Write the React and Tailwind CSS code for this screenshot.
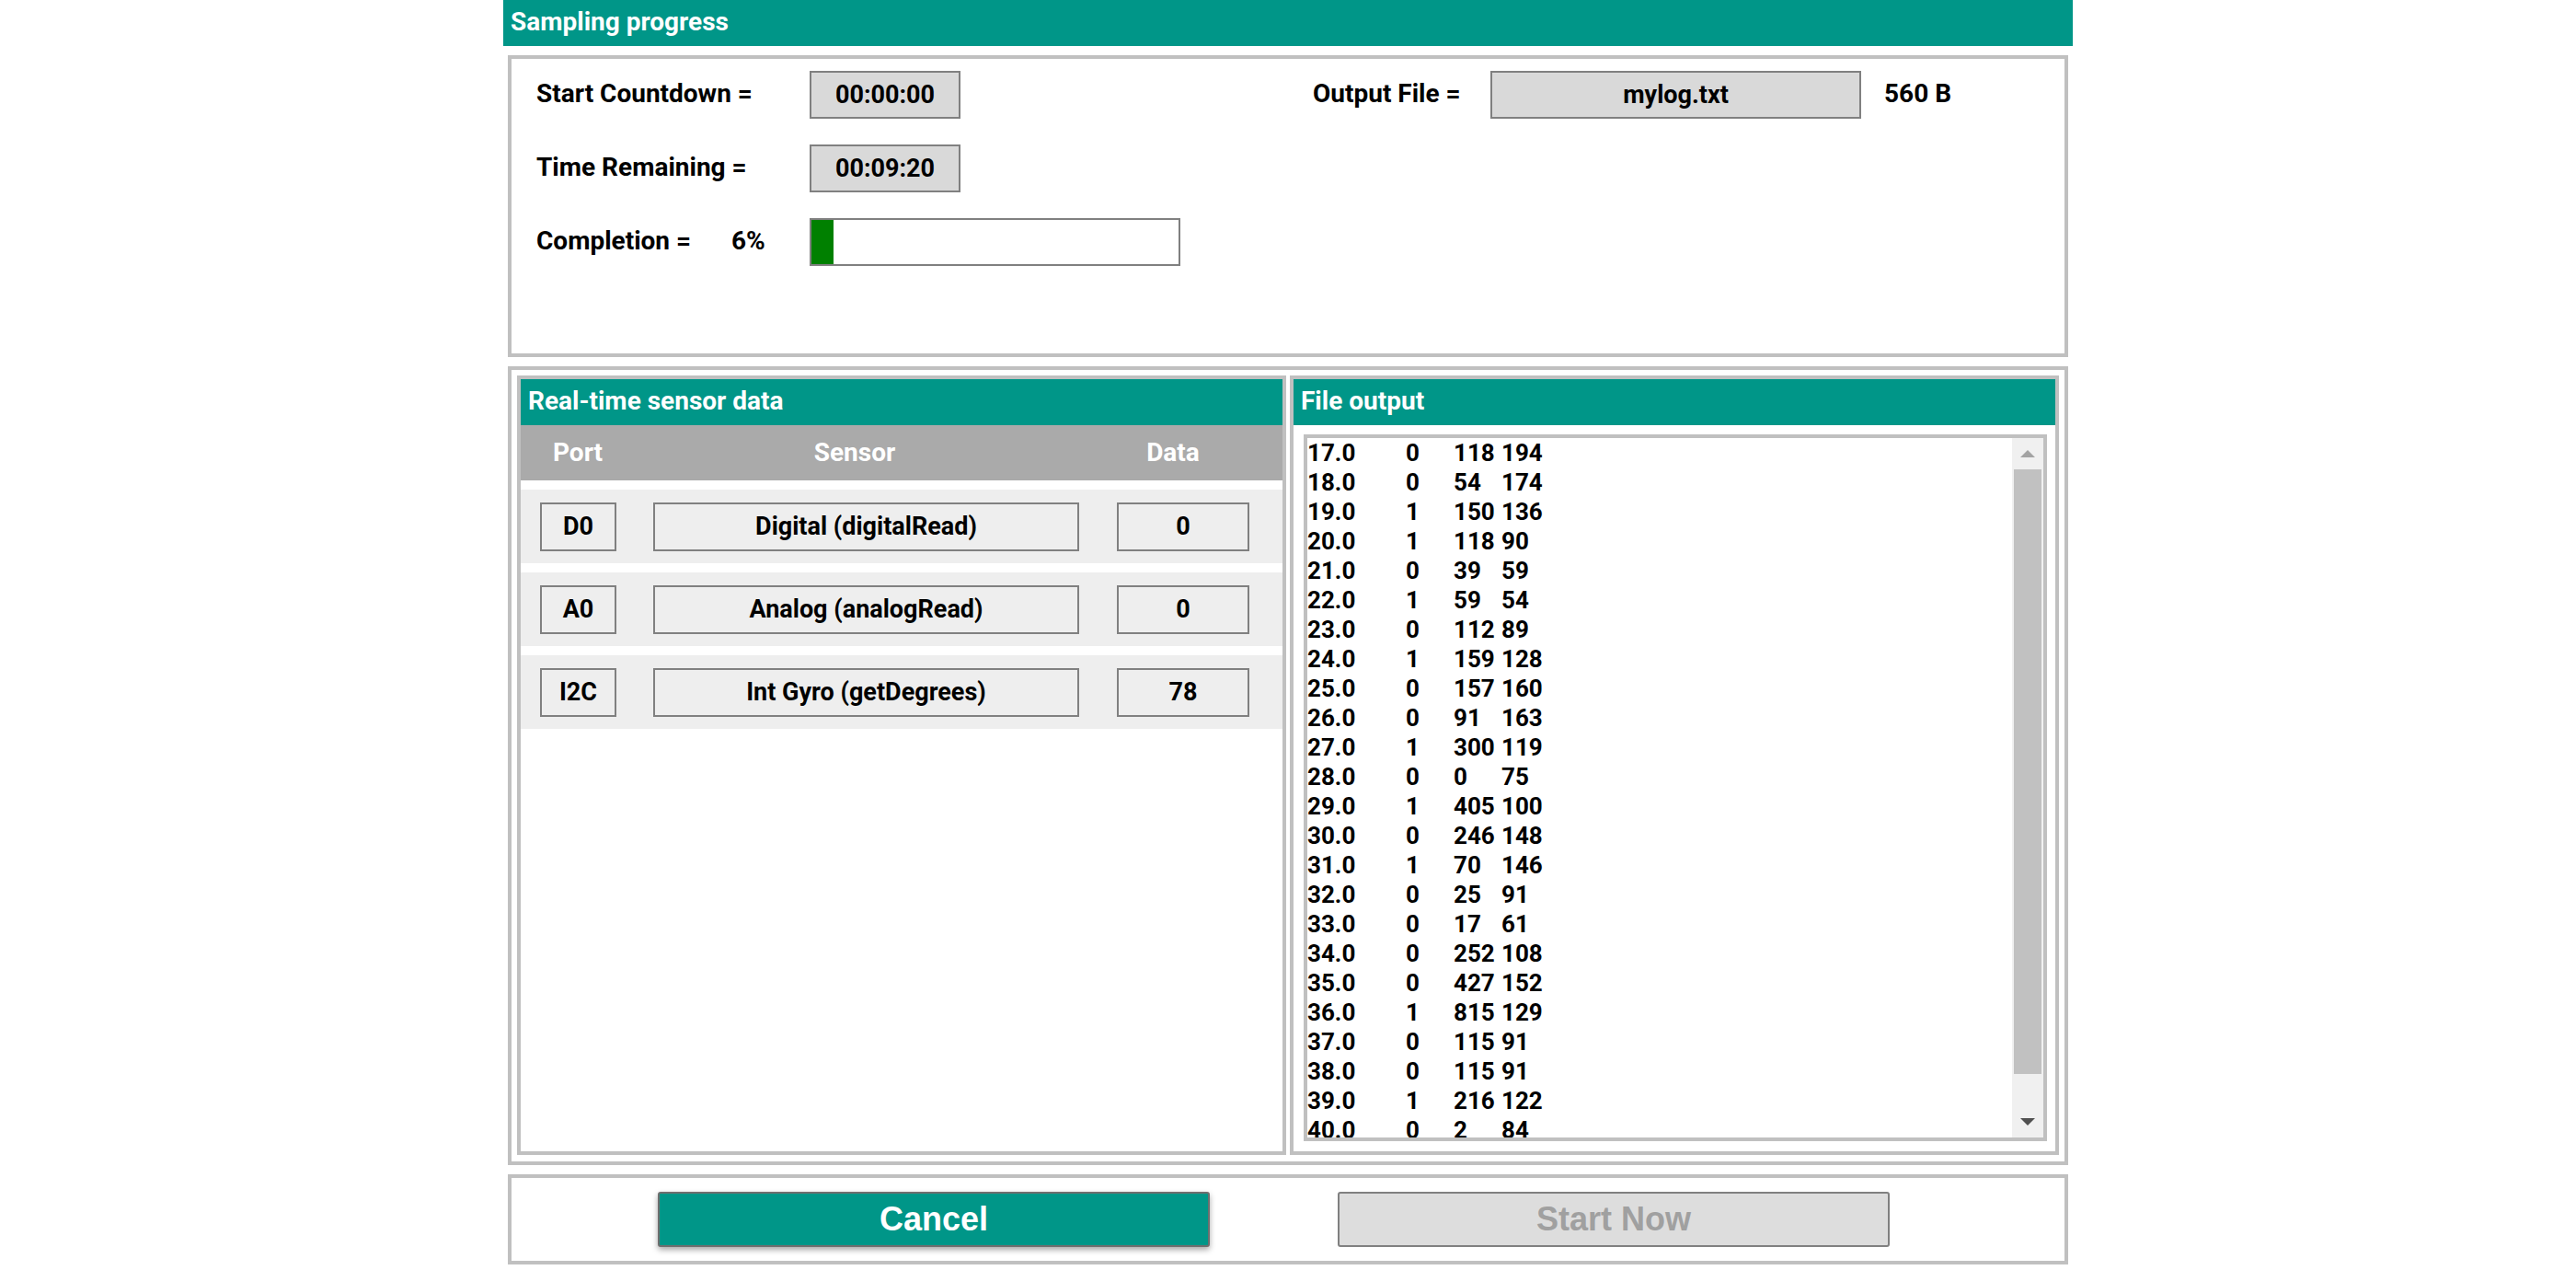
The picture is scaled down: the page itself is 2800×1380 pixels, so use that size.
import React from "react";

const fileLines = [
  ["17.0", "0", "118", "194"],
  ["18.0", "0", "54", "174"],
  ["19.0", "1", "150", "136"],
  ["20.0", "1", "118", "90"],
  ["21.0", "0", "39", "59"],
  ["22.0", "1", "59", "54"],
  ["23.0", "0", "112", "89"],
  ["24.0", "1", "159", "128"],
  ["25.0", "0", "157", "160"],
  ["26.0", "0", "91", "163"],
  ["27.0", "1", "300", "119"],
  ["28.0", "0", "0", "75"],
  ["29.0", "1", "405", "100"],
  ["30.0", "0", "246", "148"],
  ["31.0", "1", "70", "146"],
  ["32.0", "0", "25", "91"],
  ["33.0", "0", "17", "61"],
  ["34.0", "0", "252", "108"],
  ["35.0", "0", "427", "152"],
  ["36.0", "1", "815", "129"],
  ["37.0", "0", "115", "91"],
  ["38.0", "0", "115", "91"],
  ["39.0", "1", "216", "122"],
  ["40.0", "0", "2", "84"],
];

const sensors = [
  { port: "D0", sensor: "Digital (digitalRead)", data: "0" },
  { port: "A0", sensor: "Analog (analogRead)", data: "0" },
  { port: "I2C", sensor: "Int Gyro (getDegrees)", data: "78" },
];

function ValueBox({ children, className = "" }) {
  return (
    <div
      className={`h-[52px] border-2 border-[#808080] bg-[#d9d9d9] flex items-center justify-center text-[27px] ${className}`}
    >
      {children}
    </div>
  );
}

function SectionHeader({ children }) {
  return (
    <div className="h-[50px] shrink-0 bg-[#009688] text-white text-[28px] px-[8px] pb-[3px] flex items-center">
      {children}
    </div>
  );
}

function Cell({ children, className = "" }) {
  return (
    <div
      className={`h-[53px] border-2 border-[#808080] bg-[#eeeeee] flex items-center justify-center text-[27px] ${className}`}
    >
      {children}
    </div>
  );
}

export default function App() {
  const completion = 6;

  return (
    <div className="min-h-screen bg-white font-['Roboto',sans-serif] font-bold text-black">
      <div className="mx-auto w-[1706px]">
        {/* Title */}
        <SectionHeader>Sampling progress</SectionHeader>

        {/* Progress panel */}
        <div className="mx-[5px] mt-[10px] h-[328px] border-4 border-[#c0c0c0] flex pl-[27px] pt-[13px] text-[28px]">
          <div className="w-[844px] flex flex-col gap-[28px]">
            <div className="flex items-center">
              <div className="w-[297px] pb-[3px]">Start Countdown =</div>
              <ValueBox className="w-[164px]">00:00:00</ValueBox>
            </div>
            <div className="flex items-center">
              <div className="w-[297px] pb-[3px]">Time Remaining =</div>
              <ValueBox className="w-[164px]">00:09:20</ValueBox>
            </div>
            <div className="flex items-center">
              <div className="w-[212px] pb-[3px]">Completion =</div>
              <div className="w-[85px] pb-[3px]">{completion}%</div>
              <div className="w-[403px] h-[52px] border-2 border-[#808080] bg-white">
                <div className="h-full bg-[#008000]" style={{ width: `${completion}%` }} />
              </div>
            </div>
          </div>
          <div className="flex items-center h-[52px]">
            <div className="w-[193px] pb-[3px]">Output File =</div>
            <ValueBox className="w-[403px]">mylog.txt</ValueBox>
            <div className="ml-[25px] pb-[3px]">560 B</div>
          </div>
        </div>

        {/* Data panels */}
        <div className="mx-[5px] mt-[10px] h-[868px] border-4 border-[#c0c0c0] pt-[6px] px-[6px] pb-[7px] flex gap-[4px]">
          {/* Real-time sensor data */}
          <div className="flex-1 border-4 border-[#c0c0c0] flex flex-col">
            <SectionHeader>Real-time sensor data</SectionHeader>
            <div className="h-[60px] bg-[#aaaaaa] text-white text-[28px] flex items-center">
              <div className="w-[124px] text-center">Port</div>
              <div className="w-[478px] text-center">Sensor</div>
              <div className="w-[214px] text-center">Data</div>
            </div>
            <div className="flex flex-col gap-[10px] pt-[10px]">
              {sensors.map((s) => (
                <div key={s.port} className="h-[80px] bg-[#eeeeee] flex items-center pl-[21px]">
                  <Cell className="w-[83px]">{s.port}</Cell>
                  <Cell className="w-[463px] ml-[40px]">{s.sensor}</Cell>
                  <Cell className="w-[144px] ml-[41px]">{s.data}</Cell>
                </div>
              ))}
            </div>
          </div>

          {/* File output */}
          <div className="flex-1 border-4 border-[#c0c0c0] flex flex-col">
            <SectionHeader>File output</SectionHeader>
            <div className="flex-1 ml-[11px] mr-[9px] mt-[10px] mb-[11px] border-4 border-[#c0c0c0] flex overflow-hidden">
              <div className="flex-1 overflow-hidden text-[26px] leading-[32px]">
                {fileLines.map((l) => (
                  <div key={l[0]} className="flex whitespace-pre">
                    <span className="w-[107px]">{l[0]}</span>
                    <span className="w-[52px]">{l[1]}</span>
                    <span className="w-[52px]">{l[2]}</span>
                    <span>{l[3]}</span>
                  </div>
                ))}
              </div>
              {/* scrollbar */}
              <div className="w-[34px] shrink-0 bg-[#f0f0f0] flex flex-col items-center">
                <div className="h-[34px] flex items-center justify-center">
                  <svg width="16" height="8" viewBox="0 0 16 8">
                    <polygon points="8,0 16,8 0,8" fill="#a3a3a3" />
                  </svg>
                </div>
                <div className="h-[657px] w-[30px] bg-[#c1c1c1]" />
                <div className="flex-1" />
                <div className="h-[34px] flex items-center justify-center">
                  <svg width="16" height="8" viewBox="0 0 16 8">
                    <polygon points="0,0 16,0 8,8" fill="#505050" />
                  </svg>
                </div>
              </div>
            </div>
          </div>
        </div>

        {/* Buttons */}
        <div className="mx-[5px] mt-[10px] h-[98px] border-4 border-[#c0c0c0] flex items-center pl-[159px] gap-[139px] font-['Liberation_Sans',Arial,sans-serif] text-[36px]">
          <button className="w-[600px] h-[60px] rounded-[3px] bg-[#009688] border-2 border-[#6e6e6e] text-white shadow-[0_3px_6px_rgba(0,0,0,0.35)]">
            Cancel
          </button>
          <button className="w-[600px] h-[60px] rounded-[3px] bg-[#dddddd] border-2 border-[#808080] text-[#a0a0a0]">
            Start Now
          </button>
        </div>
      </div>
    </div>
  );
}
